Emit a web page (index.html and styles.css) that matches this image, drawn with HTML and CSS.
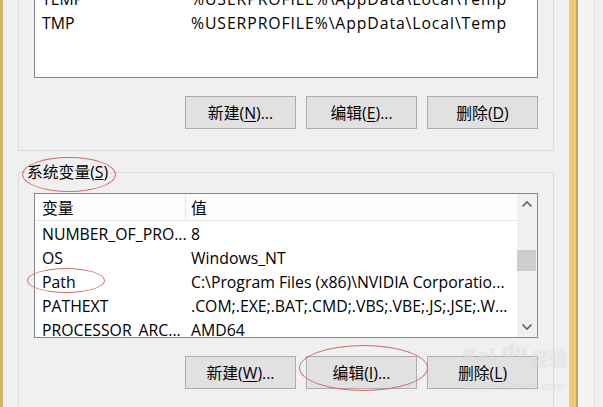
FILE: index.html
```html
<!DOCTYPE html>
<html>
<head>
<meta charset="utf-8">
<link rel="stylesheet" href="styles.css">
</head>
<body>
<div class="screen">
  <div class="stripe-left"></div>
  <div class="main">
    <div class="group group-user">
      <div class="listbox listbox-user">
        <div class="lhead">
          <div class="c1">变量</div>
          <div class="c2">值</div>
        </div>
        <div class="row"><div class="c1">TEMP</div><div class="c2 wide">%USERPROFILE%\AppData\Local\Temp</div></div>
        <div class="row"><div class="c1">TMP</div><div class="c2 wide">%USERPROFILE%\AppData\Local\Temp</div></div>
      </div>
      <div class="buttons">
        <button class="btn">新建(<u>N</u>)...</button>
        <button class="btn">编辑(<u>E</u>)...</button>
        <button class="btn">删除(<u>D</u>)</button>
      </div>
    </div>
    <fieldset class="group group-sys">
      <legend class="legend">系统变量(<u>S</u>)</legend>
      <div class="listbox listbox-sys">
        <div class="lbody">
          <div class="lhead">
            <div class="c1">变量</div>
            <div class="c2">值</div>
          </div>
          <div class="row"><div class="c1">NUMBER_OF_PRO...</div><div class="c2">8</div></div>
          <div class="row"><div class="c1">OS</div><div class="c2">Windows_NT</div></div>
          <div class="row"><div class="c1">Path</div><div class="c2">C:\Program Files (x86)\NVIDIA Corporatio...</div></div>
          <div class="row"><div class="c1">PATHEXT</div><div class="c2">.COM;.EXE;.BAT;.CMD;.VBS;.VBE;.JS;.JSE;.W...</div></div>
          <div class="row"><div class="c1">PROCESSOR_ARC...</div><div class="c2">AMD64</div></div>
        </div>
        <div class="scrollbar">
          <svg class="arrow" width="12" height="8" viewBox="0 0 12 8"><path d="M1.5 6.5 L6 2 L10.5 6.5" fill="none" stroke="#606060" stroke-width="1.6"/></svg>
          <div class="track"><div class="thumb"></div></div>
          <svg class="arrow" width="12" height="8" viewBox="0 0 12 8"><path d="M1.5 1.5 L6 6 L10.5 1.5" fill="none" stroke="#606060" stroke-width="1.6"/></svg>
        </div>
      </div>
      <div class="buttons">
        <button class="btn">新建(<u>W</u>)...</button>
        <button class="btn">编辑(<u>I</u>)...</button>
        <button class="btn">删除(<u>L</u>)</button>
      </div>
    </fieldset>
  </div>
  <div class="stripe-right">
    <div class="gold"></div>
    <div class="edge"></div>
  </div>

  <div class="mark mark-legend"></div>
  <div class="mark mark-path"></div>
  <div class="mark mark-btn"></div>

  <div class="wm wm-bai">Bai</div>
  <div class="wm wm-du">du</div>
  <div class="wm wm-jy">经验</div>
  <div class="wm wm-url">jingyan.baidu.com</div>
</div>
</body>
</html>
```
FILE: styles.css
```css
* { box-sizing: border-box; }
html, body { margin: 0; padding: 0; }
body {
  width: 603px;
  height: 407px;
  overflow: hidden;
  background: #f0f0f0;
  font-family: "Open Sans", "Noto Sans CJK SC", sans-serif;
  font-size: 15.8px;
  color: #000;
}
.screen {
  position: relative;
  display: flex;
  width: 603px;
  height: 407px;
  overflow: hidden;
}
.stripe-left {
  width: 3px;
  flex: none;
  background: #d6b46a;
}
.main {
  width: 551px;
  flex: none;
  padding-left: 15px;
}
.group {
  border: 1px solid #dcdcdc;
  width: 536px;
  padding: 0 15px;
  margin: 0;
}
.group-user {
  margin-top: -60px;
  padding-bottom: 21px;
  border-top: none;
}
.listbox {
  border: 1px solid #828790;
  background: #fff;
}
.listbox-user {
  height: 120px;
  margin-top: 18px;
}
.lhead {
  display: grid;
  grid-template-columns: 151px 1fr;
  height: 27px;
  background: #fcfcfc;
  border-bottom: 1px solid #e8e8e8;
  align-items: center;
}
.lhead .c1 { border-right: 1px solid #e5e5e5; height: 100%; display: flex; align-items: center; }
.row {
  display: grid;
  grid-template-columns: 151px 1fr;
  height: 24px;
  align-items: center;
  white-space: nowrap;
  padding-top: 2px;
}
.c1 { padding-left: 7px; }
.c2 { padding-left: 5px; }
.wide { letter-spacing: 0.9px; }
.buttons {
  display: flex;
  justify-content: flex-end;
  gap: 10px;
  margin-top: 18px;
}
.btn {
  width: 111px;
  height: 33px;
  border: 1px solid #adadad;
  background: #e1e1e1;
  font-family: "Open Sans", "Noto Sans CJK SC", sans-serif;
  font-size: 15.8px;
  color: #000;
  padding: 0;
}
.btn u { text-underline-offset: 2px; }
.group-sys {
  margin-top: 11px;
  padding-top: 11px;
  height: 300px;
}
.legend {
  margin-left: -8px;
  padding: 0 1px;
  font-size: 15.8px;
  line-height: 20px;
}
.listbox-sys {
  display: flex;
  height: 145px;
  overflow: hidden;
}
.lbody { flex: 1; }
.scrollbar {
  width: 20px;
  flex: none;
  background: #f0f0f0;
  display: flex;
  flex-direction: column;
  align-items: center;
}
.arrow { flex: none; margin: 6px 0; }
.track { flex: 1; width: 100%; position: relative; }
.thumb {
  margin-top: 36px;
  height: 21px;
  width: 19px;
  background: #cdcdcd;
}
.stripe-right {
  flex: 1;
  display: flex;
  padding-left: 15px;
}
.gold {
  width: 9px;
  flex: none;
  background: #f2c86e;
  border-right: 2px solid #c4a464;
}
.edge {
  flex: 1;
  background: #f4f4f4;
  border-right: 1px solid #e0e0e0;
  margin-right: 8px;
  position: relative;
}
.mark {
  position: absolute;
  border: 1px solid #d46a6a;
  border-radius: 50%;
}
.mark-legend { left: 22px; top: 157px; width: 94px; height: 35px; }
.mark-path { left: 27px; top: 268px; width: 78px; height: 25px; }
.mark-btn { left: 299px; top: 345px; width: 129px; height: 46px; }
.wm {
  position: absolute;
  color: rgba(255,255,255,0.35);
  text-shadow: 0 0 1px rgba(170,170,170,0.35);
  font-family: "DejaVu Sans", "Noto Sans CJK SC", sans-serif;
  font-weight: bold;
  pointer-events: none;
}
.wm-bai { left: 462px; top: 345px; font-size: 19px; }
.wm-du { left: 502px; top: 340px; font-size: 18px; }
.wm-jy { left: 531px; top: 345px; font-size: 18px; }
.wm-url { left: 463px; top: 380px; font-size: 11px; font-weight: normal; }
```
